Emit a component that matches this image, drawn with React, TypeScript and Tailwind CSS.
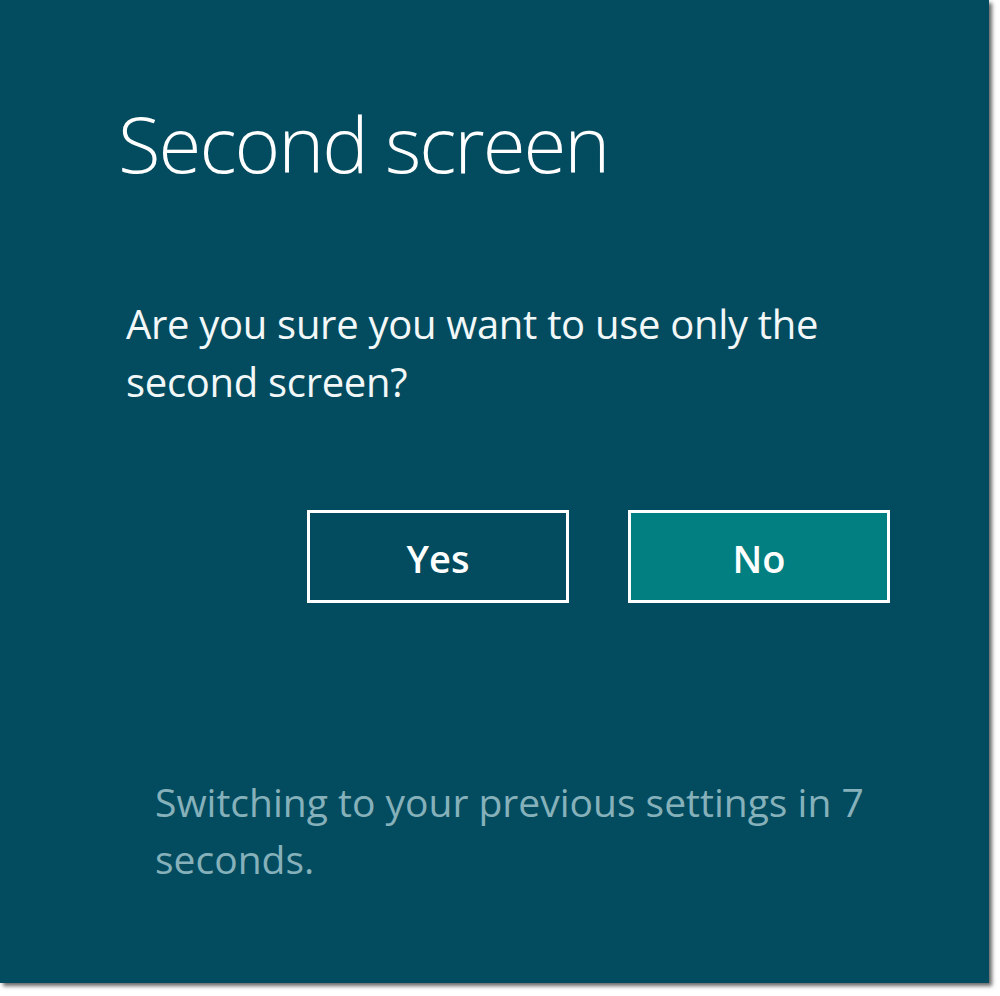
export default function App() {
  return (
    <div className="w-[1000px] h-[996px] bg-white overflow-hidden">
      <div
        className="w-[989px] h-[983px] bg-[#034c5f] shadow-[3px_3px_4px_rgba(0,0,0,0.6)] flex flex-col text-white"
        style={{ fontFamily: '"Open Sans", "Noto Sans", sans-serif' }}
      >
        {/* Title */}
        <h1 className="pl-[118px] pt-[88px] text-[78px] leading-[110px] font-light tracking-[-2px]">
          Second screen
        </h1>

        {/* Question */}
        <p className="pl-[126px] pr-[120px] mt-[97px] text-[40px] leading-[58px] font-normal tracking-[-0.3px] text-[#f2f7f8]">
          Are you sure you want to use only the second screen?
        </p>

        {/* Buttons */}
        <div className="flex gap-[59px] pl-[307px] mt-[99px]">
          <button className="w-[262px] h-[93px] border-[3px] border-white bg-transparent pt-[4px] text-[38px] font-semibold text-white">
            Yes
          </button>
          <button className="w-[262px] h-[93px] border-[3px] border-white bg-[#027f80] pt-[4px] text-[38px] font-semibold text-white">
            No
          </button>
        </div>

        {/* Countdown */}
        <p className="pl-[155px] pr-[90px] mt-[170px] text-[39px] leading-[57px] tracking-[0px] text-[#86b1ba]">
          Switching to your previous settings in 7 seconds.
        </p>
      </div>
    </div>
  );
}
